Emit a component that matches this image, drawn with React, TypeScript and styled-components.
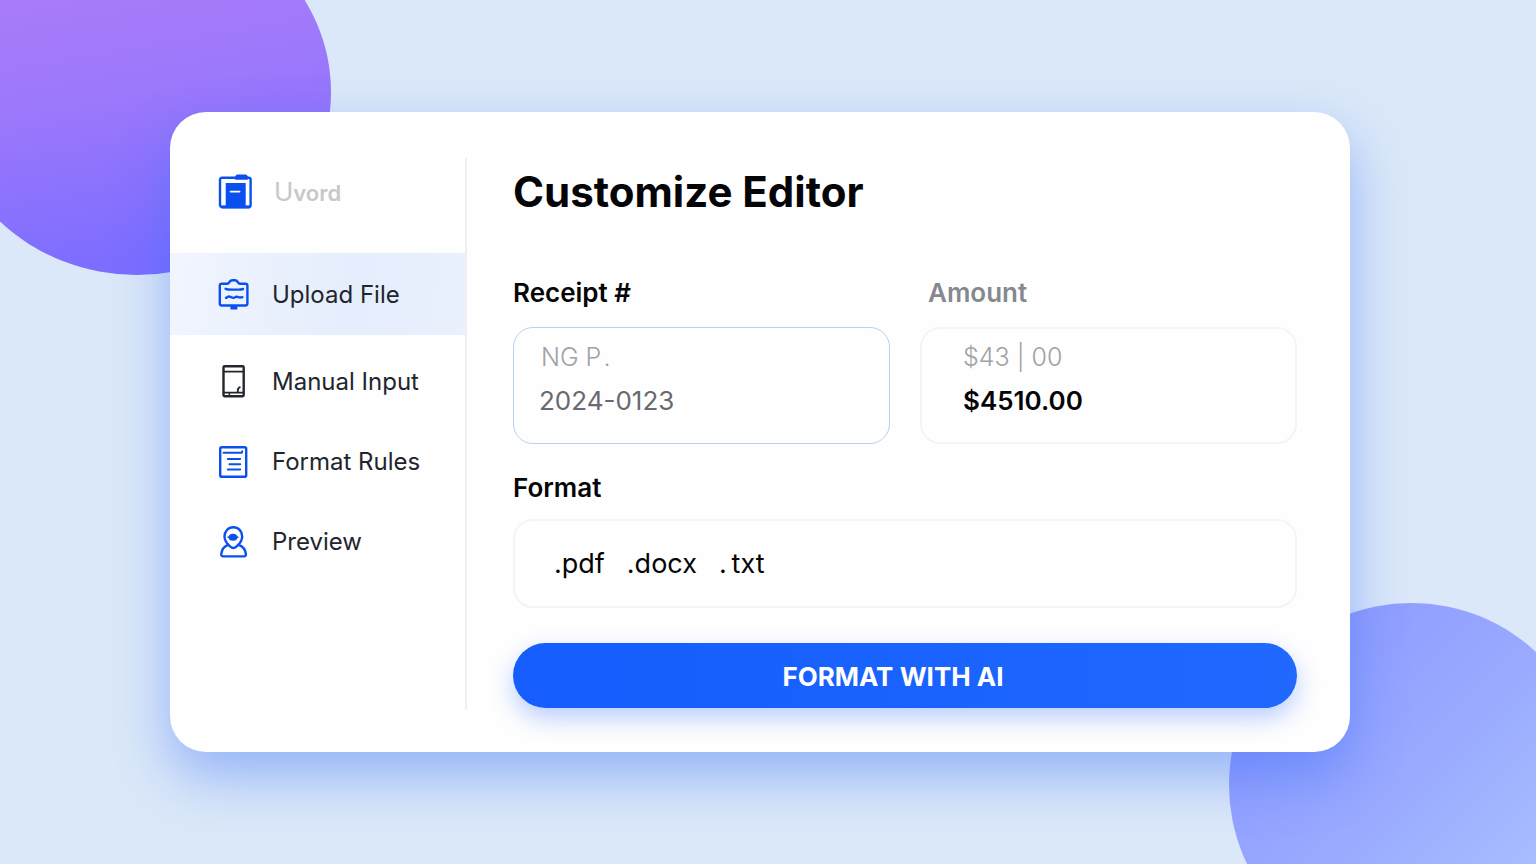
import React from "react";
import styled, { createGlobalStyle } from "styled-components";

const GlobalStyle = createGlobalStyle`
  *, *::before, *::after { box-sizing: border-box; }
  body {
    margin: 0;
    background: #dbe8f9;
    font-family: Inter, "Liberation Sans", sans-serif;
    color: #050507;
  }
`;

const Page = styled.div`
  position: relative;
  overflow: hidden;
  min-height: 100vh;
  display: flex;
  align-items: center;
  justify-content: center;
  padding: 32px 32px 32px 16px;
`;

const PurpleBlob = styled.div`
  position: absolute;
  left: -57px;
  top: -91px;
  width: 388px;
  height: 366px;
  border-radius: 50%;
  background: linear-gradient(170deg, #a87bfa 25%, #9c78fb 50%, #7f6eff 85%, #746cff 100%);
`;

const BlueBlob = styled.div`
  position: absolute;
  right: -58px;
  bottom: -103px;
  width: 365px;
  height: 364px;
  border-radius: 50%;
  background: linear-gradient(135deg, #8c98ff 10%, #9aabff 50%, #aac2ff 85%);
`;

const Card = styled.main`
  position: relative;
  flex: 1;
  max-width: 1180px;
  min-height: 640px;
  display: flex;
  border-radius: 36px;
  background: #fefefe;
  box-shadow: 0 24px 54px rgba(56, 112, 245, 0.44);
`;

const Sidebar = styled.aside`
  flex: 0 0 296px;
  padding-top: 46px;
`;

const Brand = styled.div`
  display: flex;
  align-items: center;
  gap: 21px;
  height: 68px;
  margin-bottom: 27px;
  padding-left: 47px;
  color: #c6c8cb;
  font-size: 22px;
  line-height: 28px;
  font-weight: 600;
`;

const BrandInitial = styled.span`
  font-size: 26px;
  font-weight: 400;
`;

const NavItem = styled.a<{ $active?: boolean }>`
  display: flex;
  align-items: center;
  gap: 20px;
  height: ${(p) => (p.$active ? 82 : 80)}px;
  margin-bottom: ${(p) => (p.$active ? 6 : 0)}px;
  padding-left: 46px;
  background: ${(p) => (p.$active ? "linear-gradient(100deg, #f1f5fe, #e5eefd 60%, #e9f0fe)" : "none")};
  color: #22252c;
  font-size: 24px;
  line-height: 32px;
  text-decoration: none;
`;

const NavText = styled.span`
  padding-top: 2px;
`;

const Icon = styled.svg<{ $dark?: boolean }>`
  flex: none;
  width: 36px;
  height: 36px;
  fill: none;
  color: ${(p) => (p.$dark ? "#23262d" : "#0b50ee")};
  stroke: currentColor;
  stroke-width: 2.4;
  stroke-linecap: round;
  stroke-linejoin: round;
`;

const Divider = styled.div`
  flex: none;
  width: 2px;
  margin: 46px 0 42px -1px;
  background: #eeeff2;
`;

const Content = styled.form`
  flex: 1;
  min-width: 0;
  padding: 52px 53px 44px 46px;
`;

const Title = styled.h1`
  margin: 0 0 57px;
  font-size: 42px;
  line-height: 56px;
  font-weight: 700;
`;

const FieldGrid = styled.div`
  display: grid;
  grid-template-columns: 1fr 1fr;
  gap: 30px;
  margin-bottom: 28px;
`;

const Label = styled.label<{ $muted?: boolean }>`
  display: block;
  margin-bottom: 18px;
  padding-left: ${(p) => (p.$muted ? 8 : 0)}px;
  color: ${(p) => (p.$muted ? "#85888e" : "#050507")};
  font-size: 26px;
  line-height: 32px;
  font-weight: 600;
`;

const Box = styled.div<{ $focused?: boolean; $inset: number }>`
  height: 117px;
  padding: ${(p) => (p.$focused ? 12 : 11)}px 24px 0 ${(p) => p.$inset}px;
  border: ${(p) => (p.$focused ? "1px solid #b9d0f2" : "2px solid #f3f4f5")};
  border-radius: 20px;
`;

const Hint = styled.div<{ $indent?: boolean }>`
  padding-left: ${(p) => (p.$indent ? 2 : 0)}px;
  color: #a0a2a6;
  font-size: 25px;
  line-height: 34px;
  font-weight: 300;
`;

const ValueInput = styled.input<{ $strong?: boolean }>`
  display: block;
  width: 100%;
  height: 34px;
  margin-top: 10px;
  padding: 0;
  border: 0;
  outline: 0;
  background: transparent;
  color: ${(p) => (p.$strong ? "#050507" : "#676a70")};
  font-family: inherit;
  font-size: 26px;
  line-height: 34px;
  font-weight: ${(p) => (p.$strong ? 600 : 400)};
`;

const FormatTitle = styled.h2`
  margin: 0 0 15px;
  font-size: 26px;
  line-height: 32px;
  font-weight: 600;
`;

const FormatList = styled.ul`
  display: flex;
  align-items: center;
  gap: 22px;
  height: 89px;
  margin: 0 0 35px;
  padding: 0 39px;
  border: 2px solid #f3f4f5;
  border-radius: 20px;
  list-style: none;
  font-size: 27px;
  line-height: 34px;
`;

const SubmitButton = styled.button`
  display: block;
  width: 100%;
  height: 65px;
  padding: 2px 24px 0 0;
  border: 0;
  border-radius: 33px;
  background: linear-gradient(90deg, #155dfd, #2068fe);
  box-shadow: 0 10px 24px rgba(40, 104, 250, 0.32);
  color: #fff;
  font-family: inherit;
  font-size: 26px;
  font-weight: 700;
  cursor: pointer;
`;

const LogoIcon = () => (
  <Icon viewBox="0 0 36 36" aria-hidden="true">
    <rect x="3" y="3.8" width="30.6" height="29.2" rx="2" />
    <path d="M19 3.4 20.2 1.6h8.6L30 3.4v1.2H19z" fill="currentColor" />
    <path d="M8.7 9h20v24h-20z" fill="currentColor" stroke="none" />
    <path d="M5.5 33h26.5" strokeWidth="3" />
    <path d="M13.6 17.6h9" stroke="#fff" strokeWidth="1.7" />
  </Icon>
);

const UploadIcon = () => (
  <Icon viewBox="0 0 36 36" aria-hidden="true">
    <path d="M5.8 7.7h5.4c1.4 0 1.6-.6 2.2-1.6.8-1.4 1.8-1.8 3.2-1.8h2c1.4 0 2.4.4 3.2 1.8.6 1 .8 1.6 2.2 1.6h5.4c1.4 0 2 .6 2 1.9v18c0 1.3-.6 1.9-2 1.9H5.8c-1.4 0-2-.6-2-1.9v-18c0-1.3.6-1.9 2-1.9z" />
    <path d="M9.6 12.8c2 .8 4 .8 6 .8h7c1.6 0 3-.2 4.4-.6" />
    <path d="M10 22c1.6-1.4 3-1.8 4.4-1.2 1.8.8 2.8 1.8 4.4.6 1.6-1.2 2.4-.8 3.6-.2 1.2.4 2.6.3 4 0" />
    <path d="M15.6 31h4.6v1.4h-4.6z" fill="currentColor" />
  </Icon>
);

const TabletIcon = () => (
  <Icon viewBox="0 0 36 36" aria-hidden="true" $dark>
    <rect x="7.5" y="3.3" width="20.2" height="30" rx="1.2" />
    <path d="M8 8.6h19M8 29.6h19" strokeWidth="1.8" />
    <path d="M13.4 30v3" strokeWidth="1.4" />
    <path d="M21.8 28.6c-.3-1.8.2-3 1.4-4l.6-.4" strokeWidth="1.9" />
  </Icon>
);

const RulesIcon = () => (
  <Icon viewBox="0 0 36 36" aria-hidden="true">
    <rect x="4.2" y="4.2" width="26" height="29.6" rx="1.6" />
    <path d="M7.6 9.8h18.2l.4-1.6" strokeWidth="2" />
    <path d="M11.8 16h12.4M13.4 21.2h10.8M11.8 26.6h12.4" strokeWidth="2" />
  </Icon>
);

const PreviewIcon = () => (
  <Icon viewBox="0 0 36 36" aria-hidden="true">
    <path d="M17.3 4.3c5.2 0 8.9 4 8.9 9.2 0 4.6-3 7.8-5.8 10.2-2.2 1.9-3.9 1.9-6.1 0-2.8-2.4-5.8-5.6-5.8-10.2 0-5.2 3.6-9.2 8.8-9.2z" />
    <path d="M11.600 22.2c-3.6 1.4-5.7 4.4-6.3 8.6-.2 1.6.3 2.6 1.9 2.6h20.8c1.6 0 2.1-1 1.9-2.6-.6-4.2-3.1-7.2-6.7-8.6" />
    <ellipse cx="17" cy="14.2" rx="4.4" ry="3.5" fill="currentColor" stroke="none" />
    <path d="M12 14.2h1M21 14.2h1" strokeWidth="1.4" />
  </Icon>
);

const navItems = [
  { label: "Upload File", Glyph: UploadIcon, active: true },
  { label: "Manual Input", Glyph: TabletIcon },
  { label: "Format Rules", Glyph: RulesIcon },
  { label: "Preview", Glyph: PreviewIcon },
];

const formats = [".pdf", ".docx", ".\u2009txt"];

export default function App() {
  return (
    <>
      <GlobalStyle />
      <Page>
        <PurpleBlob />
        <BlueBlob />
        <Card>
          <Sidebar>
            <Brand>
              <LogoIcon />
              <span>
                <BrandInitial>U</BrandInitial>vord
              </span>
            </Brand>
            <nav>
              {navItems.map(({ label, Glyph, active }) => (
                <NavItem key={label} href="#" $active={active} aria-current={active ? "page" : undefined}>
                  <Glyph />
                  <NavText>{label}</NavText>
                </NavItem>
              ))}
            </nav>
          </Sidebar>
          <Divider />
          <Content onSubmit={(e) => e.preventDefault()}>
            <Title>Customize Editor</Title>
            <FieldGrid>
              <div>
                <Label htmlFor="receipt">Receipt #</Label>
                <Box $focused $inset={25}>
                  <Hint $indent>NG P{"\u200A"}.</Hint>
                  <ValueInput id="receipt" type="text" defaultValue="2024-0123" />
                </Box>
              </div>
              <div>
                <Label htmlFor="amount" $muted>
                  Amount
                </Label>
                <Box $inset={41}>
                  <Hint>$43 | 00</Hint>
                  <ValueInput id="amount" type="text" defaultValue="$4510.00" $strong />
                </Box>
              </div>
            </FieldGrid>
            <FormatTitle>Format</FormatTitle>
            <FormatList>
              {formats.map((format) => (
                <li key={format}>{format}</li>
              ))}
            </FormatList>
            <SubmitButton type="submit">FORMAT WITH AI</SubmitButton>
          </Content>
        </Card>
      </Page>
    </>
  );
}
